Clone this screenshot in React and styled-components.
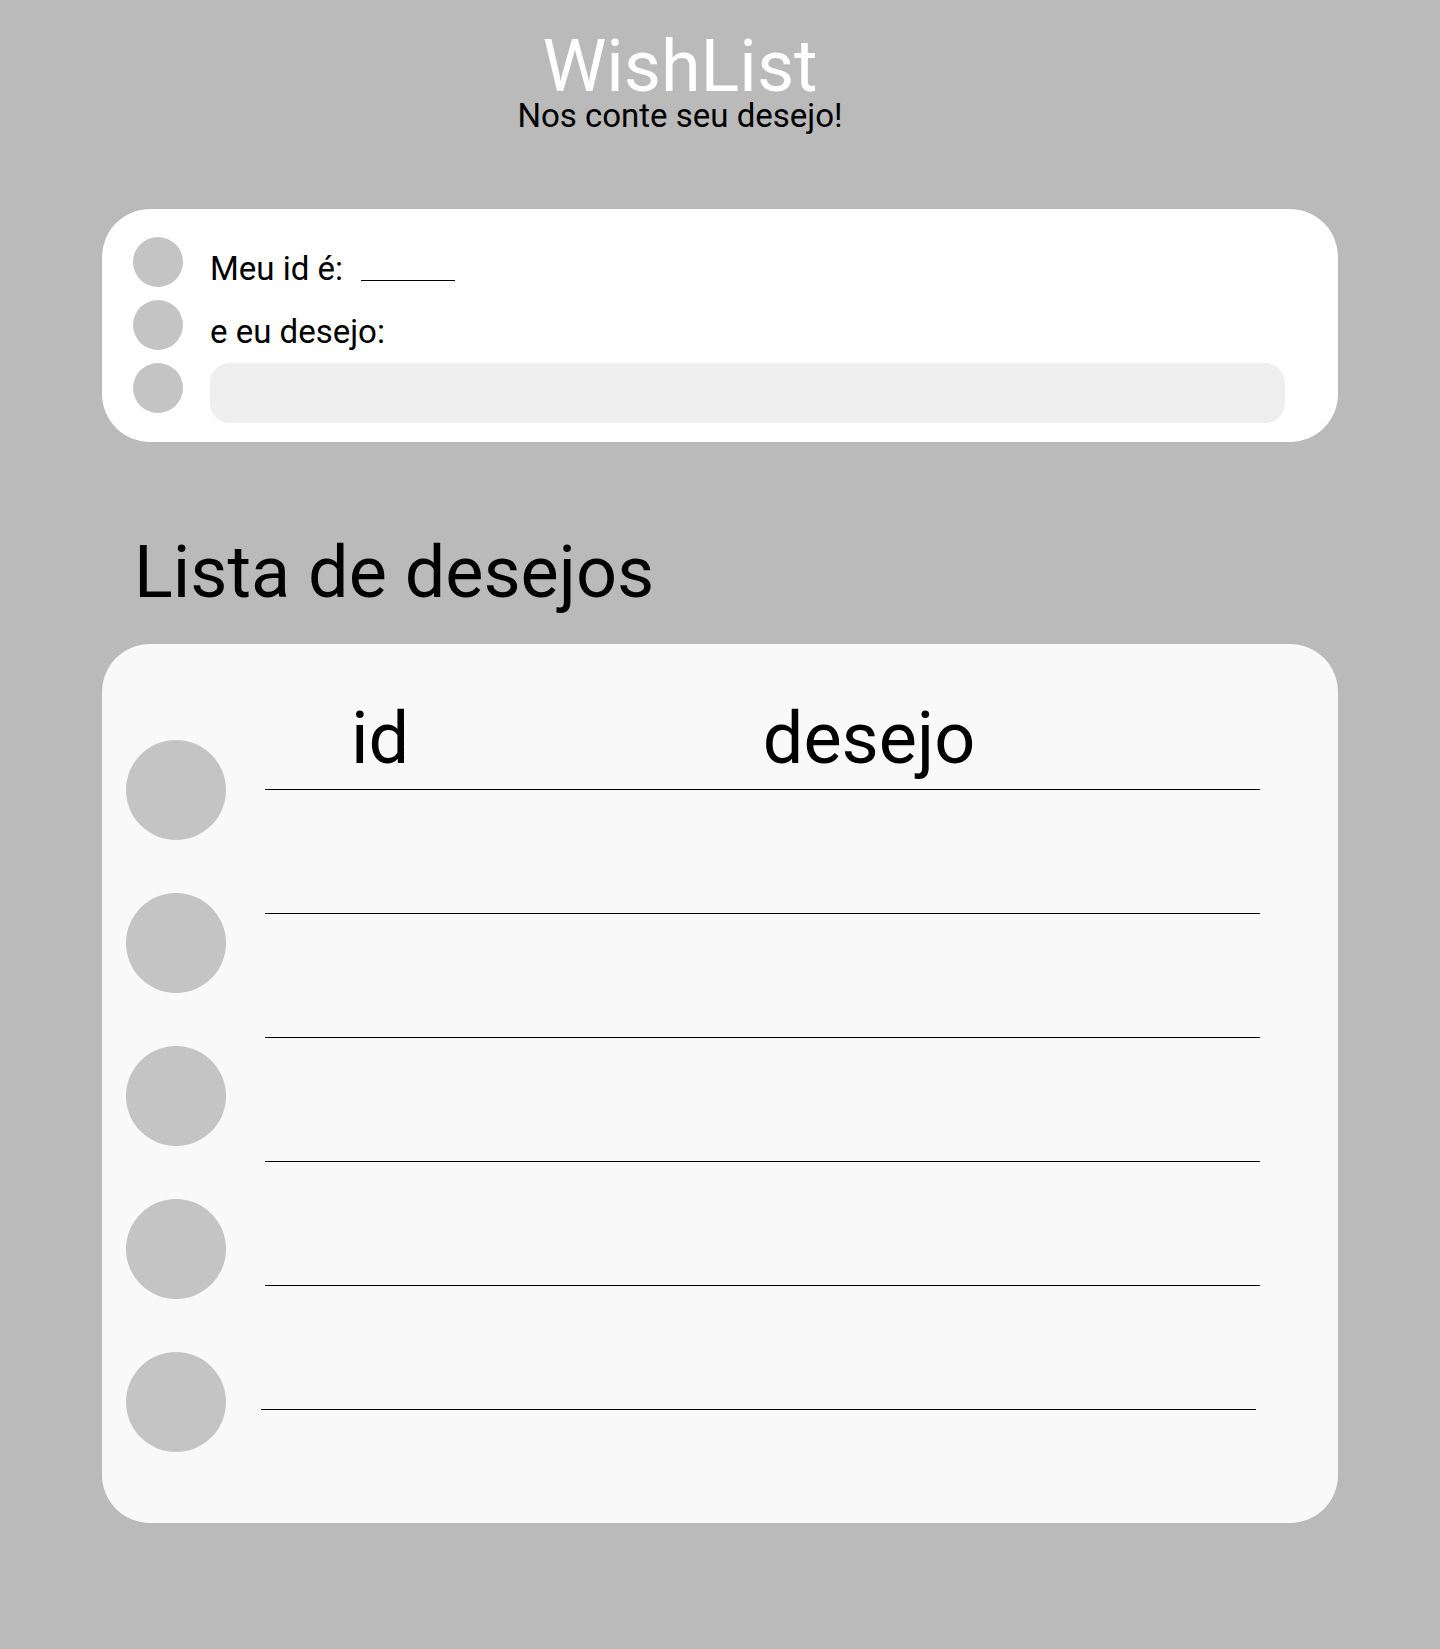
import React from "react";
import styled, { createGlobalStyle } from "styled-components";

const Global = createGlobalStyle`
  html, body {
    margin: 0;
    padding: 0;
    background: #bababa;
    font-family: Roboto, "Liberation Sans", sans-serif;
  }
  #root { min-height: 1649px; }
`;

const Page = styled.div`
  display: flex;
  flex-direction: column;
  padding: 0 102px 126px;
`;

const Header = styled.header`
  display: flex;
  flex-direction: column;
  align-items: center;
  padding: 33px 80px 0 0;
  margin: 0 -102px;
`;

const Title = styled.h1`
  margin: 0;
  font-size: 72px;
  line-height: 68px;
  font-weight: 400;
  color: #ffffff;
`;

const Subtitle = styled.p`
  margin: 0;
  font-size: 33px;
  line-height: 29px;
  color: #000;
`;

const FormCard = styled.section`
  margin-top: 79px;
  background: #ffffff;
  border-radius: 48px;
  padding: 28px 53px 19px 31px;
  display: flex;
  flex-direction: column;
  gap: 13px;
`;

const FormRow = styled.div`
  display: flex;
  align-items: ${(p) => (p.$top ? "flex-start" : "flex-end")};
  gap: 27px;
  height: ${(p) => p.$h || 50}px;
`;

const Dot = styled.span`
  flex: 0 0 auto;
  width: ${(p) => p.$size}px;
  height: ${(p) => p.$size}px;
  border-radius: 50%;
  background: #c4c4c4;
`;

const Label = styled.span`
  font-size: 33px;
  line-height: 37px;
  color: #000;
  display: flex;
  align-items: flex-end;
`;

const Blank = styled.span`
  display: inline-block;
  width: 94px;
  margin-left: 18px;
  margin-bottom: 6px;
  border-bottom: 1px solid #000;
`;

const WishInput = styled.div`
  flex: 1;
  height: 60px;
  border-radius: 20px;
  background: #eeeeee;
`;

const SectionTitle = styled.h2`
  margin: 95px 0 0 32px;
  font-size: 72px;
  line-height: 72px;
  font-weight: 400;
  color: #000;
`;

const ListCard = styled.section`
  margin-top: 35px;
  background: #f9f9f9;
  border-radius: 48px;
  padding: 0 78px 0 24px;
  display: flex;
  gap: 39px;
`;

const DotColumn = styled.div`
  display: flex;
  flex-direction: column;
  gap: 53px;
  padding: 96px 0 71px;
`;

const Table = styled.div`
  flex: 1;
  display: flex;
  flex-direction: column;
  padding-top: 59px;
`;

const HeadRow = styled.div`
  display: grid;
  grid-template-columns: 230px 1fr;
  padding-bottom: 14px;
  border-bottom: 1px solid #000;
`;

const HeadCell = styled.div`
  font-size: 72px;
  line-height: 72px;
  color: #000;
  text-align: center;
  padding-right: ${(p) => p.$pr || 0}px;
`;

const BodyRow = styled.div`
  height: 123px;
  border-bottom: 1px solid #000;
  margin-left: ${(p) => (p.$shift ? -4 : 0)}px;
  margin-right: ${(p) => (p.$shift ? 4 : 0)}px;
`;

export default function App() {
  return (
    <>
      <Global />
      <Page>
        <Header>
          <Title>WishList</Title>
          <Subtitle>Nos conte seu desejo!</Subtitle>
        </Header>

        <FormCard>
          <FormRow>
            <Dot $size={50} />
            <Label>
              Meu id é:
              <Blank />
            </Label>
          </FormRow>
          <FormRow>
            <Dot $size={50} />
            <Label>e eu desejo:</Label>
          </FormRow>
          <FormRow $top $h={60}>
            <Dot $size={50} />
            <WishInput />
          </FormRow>
        </FormCard>

        <SectionTitle>Lista de desejos</SectionTitle>

        <ListCard>
          <DotColumn>
            {[0, 1, 2, 3, 4].map((i) => (
              <Dot key={i} $size={100} />
            ))}
          </DotColumn>
          <Table>
            <HeadRow>
              <HeadCell>id</HeadCell>
              <HeadCell $pr={17}>desejo</HeadCell>
            </HeadRow>
            {[0, 1, 2, 3, 4].map((i) => (
              <BodyRow key={i} $shift={i === 4} />
            ))}
          </Table>
        </ListCard>
      </Page>
    </>
  );
}
